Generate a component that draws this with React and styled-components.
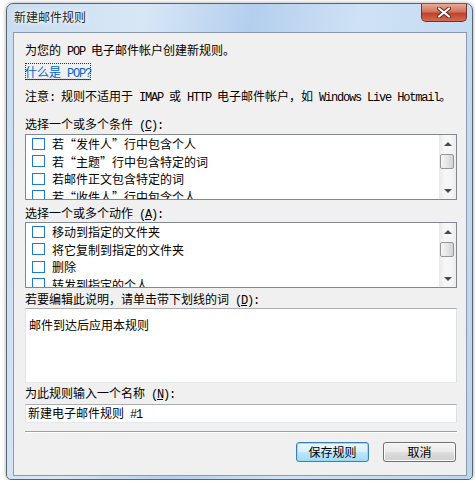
import React from 'react';
import styled, { createGlobalStyle } from 'styled-components';

const GlobalStyle = createGlobalStyle`
  html, body {
    margin: 0;
    background: #ffffff;
  }
  body {
    font-family: "Noto Sans CJK SC", "Noto Sans", sans-serif;
    font-size: 12px;
    color: #000;
  }
`;

const Window = styled.div`
  box-sizing: border-box;
  width: 467px;
  height: 477px;
  margin: 3px 0 0 6px;
  border: 1px solid #5a6470;
  border-radius: 7px 7px 5px 5px;
  background: linear-gradient(100deg, #c9ddf1 0%, #d8e7f6 25%, #b3cfee 45%, #cfe2f5 65%, #bcd5ef 100%);
  box-shadow: 0 0 4px rgba(0, 0, 0, 0.35);
  display: flex;
  flex-direction: column;
`;

const TitleBar = styled.div`
  height: 28px;
  display: flex;
  justify-content: space-between;
  padding-left: 7px;
`;

const Title = styled.div`
  line-height: 26px;
  color: #1e1e1e;
  text-shadow: 0 0 6px #fff, 0 0 3px #fff;
`;

const CloseButton = styled.div`
  width: 46px;
  height: 18px;
  margin-right: 5px;
  box-sizing: border-box;
  border: 1px solid #6e3328;
  border-top: none;
  border-radius: 0 0 5px 5px;
  background: linear-gradient(#e9a997 0%, #d4735c 45%, #c0432c 55%, #d26a52 100%);
  display: flex;
  align-items: center;
  justify-content: center;
`;

const Client = styled.div`
  box-sizing: border-box;
  width: 454px;
  height: 444px;
  margin-left: 6px;
  border: 1px solid #8b9bad;
  background: #f0f0f0;
  padding: 9px 9px 0 11px;
  display: flex;
  flex-direction: column;
`;

const Line = styled.div`
  height: 16px;
  line-height: 16px;
  white-space: nowrap;
  margin-top: ${p => p.$gap || 0}px;
`;

const Latin = styled.span`
  font-family: "Liberation Mono", monospace;
  font-size: 12px;
  letter-spacing: -1.2px;
`;

const Link = styled.span`
  color: #0066cc;
  text-decoration: underline dotted;
  text-underline-offset: 2px;
  outline: 1px dotted #333;
  outline-offset: -1px;
`;

const ListBox = styled.div`
  box-sizing: border-box;
  height: ${p => p.$h}px;
  margin-top: ${p => p.$gap || 0}px;
  border: 1px solid #828790;
  background: #fff;
  display: flex;
`;

const Items = styled.div`
  flex: 1;
  overflow: hidden;
`;

const Item = styled.div`
  height: 17.5px;
  display: flex;
  align-items: center;
  padding-left: 6px;
  white-space: nowrap;
`;

const Check = styled.span`
  box-sizing: border-box;
  width: 13px;
  height: 12px;
  border: 1px solid #1f7ad0;
  background: #fff;
  margin-right: 7px;
  flex-shrink: 0;
`;

const ScrollBar = styled.div`
  width: 17px;
  background: linear-gradient(90deg, #e8e8e8, #f6f6f6 30%, #f6f6f6 70%, #ececec);
  display: flex;
  flex-direction: column;
`;

const Arrow = styled.div`
  height: 17px;
  display: flex;
  align-items: center;
  justify-content: center;
  &::after {
    content: "";
    border-left: 4px solid transparent;
    border-right: 4px solid transparent;
    ${p => p.$down ? 'border-top: 4px solid #4a4a4a;' : 'border-bottom: 4px solid #4a4a4a;'}
  }
`;

const Track = styled.div`
  flex: 1;
`;

const Thumb = styled.div`
  box-sizing: border-box;
  width: 14px;
  height: 15px;
  margin: 2px 0 0 1px;
  border: 1px solid #979797;
  border-radius: 2px;
  background: linear-gradient(90deg, #f4f4f4, #e6e6e6 50%, #d3d3d3);
`;

const TextBox = styled.div`
  box-sizing: border-box;
  height: ${p => p.$h}px;
  margin-top: ${p => p.$gap || 0}px;
  border: 1px solid #abadb3;
  border-color: #abadb3 #dbdfe6 #e3e9ef #e2e3ea;
  background: #fff;
  padding: ${p => p.$pad};
  line-height: 16px;
  white-space: nowrap;
`;

const Separator = styled.div`
  margin-top: 8px;
  border-top: 1px solid #a0a0a0;
  border-bottom: 1px solid #ffffff;
`;

const Buttons = styled.div`
  display: flex;
  justify-content: flex-end;
  gap: 14px;
  margin-top: 9px;
  padding-right: 1px;
`;

const Button = styled.div`
  box-sizing: border-box;
  width: 73px;
  height: 20px;
  border: 1px solid ${p => p.$default ? '#3c7fb1' : '#707070'};
  border-radius: 3px;
  background: ${p => p.$default
    ? 'linear-gradient(#eaf6fd 0%, #d9f0fc 50%, #bee6fd 51%, #a7d9f5 100%)'
    : 'linear-gradient(#f2f2f2 0%, #ebebeb 50%, #dddddd 51%, #cfcfcf 100%)'};
  box-shadow: inset 0 0 0 1px ${p => p.$default ? '#8fdcf8' : '#fcfcfc'};
  display: flex;
  align-items: center;
  justify-content: center;
  line-height: 18px;
`;

function CheckList({ items }) {
  return (
    <>
      <Items>
        {items.map(t => (
          <Item key={t}><Check />{t}</Item>
        ))}
      </Items>
      <ScrollBar>
        <Arrow />
        <Track><Thumb /></Track>
        <Arrow $down />
      </ScrollBar>
    </>
  );
}

const conditions = [
  '若“发件人”行中包含个人',
  '若“主题”行中包含特定的词',
  '若邮件正文包含特定的词',
  '若“收件人”行中包含个人',
];

const actions = [
  '移动到指定的文件夹',
  '将它复制到指定的文件夹',
  '删除',
  '转发到指定的个人',
];

export default function App() {
  return (
    <>
      <GlobalStyle />
      <Window>
        <TitleBar>
          <Title>新建邮件规则</Title>
          <CloseButton>
            <svg width="14" height="11" viewBox="0 0 14 11">
              <path d="M2 1.5 L12 9.5 M12 1.5 L2 9.5" stroke="#5a2a22" strokeWidth="4" strokeLinecap="round" />
              <path d="M2 1.5 L12 9.5 M12 1.5 L2 9.5" stroke="#ffffff" strokeWidth="2.2" strokeLinecap="round" />
            </svg>
          </CloseButton>
        </TitleBar>
        <Client>
          <Line>为您的<Latin> POP </Latin>电子邮件帐户创建新规则。</Line>
          <Line $gap={6}><Link>什么是<Latin> POP?</Latin></Link></Line>
          <Line $gap={8}>
            注意<Latin>: </Latin>规则不适用于<Latin> IMAP </Latin>或<Latin> HTTP </Latin>电子邮件帐户，如<Latin> Windows Live Hotmail</Latin>。
          </Line>
          <Line $gap={12}>选择一个或多个条件<Latin> (<u>C</u>):</Latin></Line>
          <ListBox $h={66} $gap={2}>
            <CheckList items={conditions} />
          </ListBox>
          <Line $gap={5}>选择一个或多个动作<Latin> (<u>A</u>):</Latin></Line>
          <ListBox $h={66} $gap={1}>
            <CheckList items={actions} />
          </ListBox>
          <Line $gap={3}>若要编辑此说明，请单击带下划线的词<Latin> (<u>D</u>):</Latin></Line>
          <TextBox $h={75} $gap={1} $pad="8px 3px">邮件到达后应用本规则</TextBox>
          <Line $gap={2}>为此规则输入一个名称<Latin> (<u>N</u>):</Latin></Line>
          <TextBox $h={19} $gap={3} $pad="0 2px">新建电子邮件规则<Latin> #1</Latin></TextBox>
          <Separator />
          <Buttons>
            <Button $default>保存规则</Button>
            <Button>取消</Button>
          </Buttons>
        </Client>
      </Window>
    </>
  );
}
